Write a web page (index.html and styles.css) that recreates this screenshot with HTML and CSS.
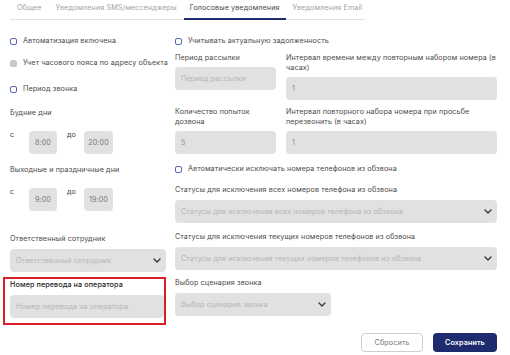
FILE: index.html
```html
<!DOCTYPE html>
<html lang="ru">
<head>
    <meta charset="UTF-8">
    <meta name="viewport" content="width=device-width, initial-scale=1.0">
    <title>Голосовые уведомления</title>
    <link rel="stylesheet" href="styles.css">
</head>
<body>
    <div class="page">
        <nav class="tabs">
            <span class="tab">Общее</span>
            <span class="tab">Уведомления SMS/мессенджеры</span>
            <span class="tab active">Голосовые уведомления</span>
            <span class="tab">Уведомления Email</span>
        </nav>

        <div class="form">
            <!-- левая колонка -->
            <div class="col-left">
                <label class="check"><span class="box"></span>Автоматизация включена</label>
                <label class="check check-2"><span class="box disabled"></span>Учет часового пояса по адресу объекта</label>
                <label class="check check-3"><span class="box"></span>Период звонка</label>

                <div class="caption days">Будние дни</div>
                <div class="time-row">
                    <span class="time-label">с</span>
                    <div class="time-box">8:00</div>
                    <span class="time-label to">до</span>
                    <div class="time-box wide">20:00</div>
                </div>

                <div class="caption days-2">Выходные и праздничные дни</div>
                <div class="time-row">
                    <span class="time-label">с</span>
                    <div class="time-box">9:00</div>
                    <span class="time-label to">до</span>
                    <div class="time-box wide">19:00</div>
                </div>

                <div class="field owner">
                    <div class="caption">Ответственный сотрудник</div>
                    <div class="select">
                        <span class="placeholder">Ответственный сотрудник</span>
                        <svg class="chevron" viewBox="0 0 8 5"><path d="M1 1l3 3 3-3"/></svg>
                    </div>
                </div>

                <div class="field highlight">
                    <div class="caption strong">Номер перевода на оператора</div>
                    <div class="input"><span class="placeholder">Номер перевода на оператора</span></div>
                </div>
            </div>

            <!-- правая колонка -->
            <div class="col-right">
                <label class="check"><span class="box"></span>Учитывать актуальную задолженность</label>

                <div class="pair-grid">
                    <div class="field tight">
                        <div class="caption">Период рассылки</div>
                        <div class="input"><span class="placeholder">Период рассылки</span></div>
                    </div>
                    <div class="field tight">
                        <div class="caption">Интервал времени между повторным набором номера (в часах)</div>
                        <div class="input"><span class="value">1</span></div>
                    </div>
                    <div class="field tight">
                        <div class="caption">Количество попыток дозвона</div>
                        <div class="input"><span class="value">5</span></div>
                    </div>
                    <div class="field tight">
                        <div class="caption">Интервал повторного набора номера при просьбе перезвонить (в часах)</div>
                        <div class="input"><span class="value">1</span></div>
                    </div>
                </div>

                <label class="check check-auto"><span class="box"></span>Автоматически исключать номера телефонов из обзвона</label>

                <div class="field all-status">
                    <div class="caption">Статусы для исключения всех номеров телефона из обзвона</div>
                    <div class="select">
                        <span class="placeholder">Статусы для исключения всех номеров телефона из обзвона</span>
                        <svg class="chevron" viewBox="0 0 8 5"><path d="M1 1l3 3 3-3"/></svg>
                    </div>
                </div>

                <div class="field cur-status">
                    <div class="caption">Статусы для исключения текущих номеров телефонов из обзвона</div>
                    <div class="select">
                        <span class="placeholder">Статусы для исключения текущих номеров телефонов из обзвона</span>
                        <svg class="chevron" viewBox="0 0 8 5"><path d="M1 1l3 3 3-3"/></svg>
                    </div>
                </div>

                <div class="field scenario">
                    <div class="caption">Выбор сценария звонка</div>
                    <div class="select short">
                        <span class="placeholder">Выбор сценария звонка</span>
                        <svg class="chevron" viewBox="0 0 8 5"><path d="M1 1l3 3 3-3"/></svg>
                    </div>
                </div>
            </div>
        </div>

        <div class="actions">
            <button class="btn reset">Сбросить</button>
            <button class="btn save">Сохранить</button>
        </div>
    </div>
</body>
</html>
```

FILE: styles.css
```css
body {
    margin: 0;
    padding: 0;
    background: #fff;
    font-family: Inter, "Noto Sans", sans-serif;
    font-size: 7.2px;
    letter-spacing: 0.1px;
    color: #444;
}
.page {
    width: 487px;
    padding-left: 10px;
}

/* вкладки */
.tabs {
    display: flex;
    width: 355px;
    height: 19px;
    border-bottom: 1px solid #e4e4e4;
}
.tab {
    padding: 0 7px;
    line-height: 15px;
    color: #a3a3a3;
    white-space: nowrap;
}
.tab.active {
    color: #4a4a4a;
    border-bottom: 2px solid #1e2b6e;
    margin-bottom: -1px;
    padding: 0 6px;
}

/* колонки */
.form {
    display: flex;
    gap: 9px;
    margin-top: 16px;
}
.col-left {
    width: 156px;
    display: flex;
    flex-direction: column;
}
.col-right {
    width: 322px;
    display: flex;
    flex-direction: column;
}

.check {
    display: flex;
    align-items: center;
    gap: 6px;
    height: 10px;
    line-height: 10px;
    color: #4a4a4a;
    white-space: nowrap;
}
.box {
    width: 5px;
    height: 5px;
    border: 1.5px solid #5566b8;
    border-radius: 2px;
    background: #fff;
    flex: none;
}
.box.disabled {
    border-color: #c9c9c9;
    background: #c9c9c9;
}
.check-2 { margin-top: 12px; }
.check-3 { margin-top: 16px; }
.check-auto { margin-top: 10px; }

.caption {
    line-height: 10px;
    color: #4a4a4a;
}
.caption.strong {
    color: #222;
    font-weight: 500;
}
.days { margin-top: 14px; }
.days-2 { margin-top: 11px; }

/* время */
.time-row {
    display: flex;
    align-items: flex-start;
    margin-top: 12px;
}
.time-label {
    width: 19px;
    line-height: 10px;
}
.time-label.to {
    width: 17px;
    margin-left: 10px;
}
.time-box {
    width: 28px;
    height: 23px;
    margin-top: 1px;
    border-radius: 4px;
    background: #e1e1e1;
    color: #777;
    display: flex;
    align-items: center;
    justify-content: center;
}
.time-box.wide { width: 29px; }

/* поля */
.field {
    display: flex;
    flex-direction: column;
    gap: 5px;
}
.field.tight { gap: 4px; }
.owner { margin-top: 23px; }
.all-status { margin-top: 11px; }
.cur-status { margin-top: 9px; }
.scenario { margin-top: 8px; }

.input, .select {
    height: 23px;
    border-radius: 4px;
    background: #e1e1e1;
    display: flex;
    align-items: center;
    padding: 0 6px;
    white-space: nowrap;
    overflow: hidden;
}
.select {
    justify-content: space-between;
    padding-right: 5px;
}
.select.short { width: 145px; }
.placeholder { color: #b5b5b5; }
.value { color: #8f8f8f; }
.chevron {
    width: 8px;
    height: 5px;
    fill: none;
    stroke: #333;
    stroke-width: 1.3;
    stroke-linecap: round;
    stroke-linejoin: round;
    flex: none;
}

.highlight {
    margin: 5px 0 0 -7px;
    padding: 1px 0 5px 5px;
    border: 2px solid #d81f26;
}

.pair-grid {
    display: grid;
    grid-template-columns: 101px 211px;
    column-gap: 10px;
    row-gap: 7px;
    margin-top: 7px;
    align-items: start;
}

/* кнопки */
.actions {
    display: flex;
    justify-content: flex-end;
    gap: 10px;
    margin-top: 8px;
}
.btn {
    height: 19px;
    border-radius: 4px;
    font-family: inherit;
    font-size: 7.2px;
    letter-spacing: 0.1px;
    cursor: pointer;
}
.btn.reset {
    width: 62px;
    background: #fff;
    border: 1px solid #cfcfcf;
    color: #777;
}
.btn.save {
    width: 64px;
    background: #1e2b6e;
    border: none;
    color: #fff;
    font-weight: 600;
}
```
